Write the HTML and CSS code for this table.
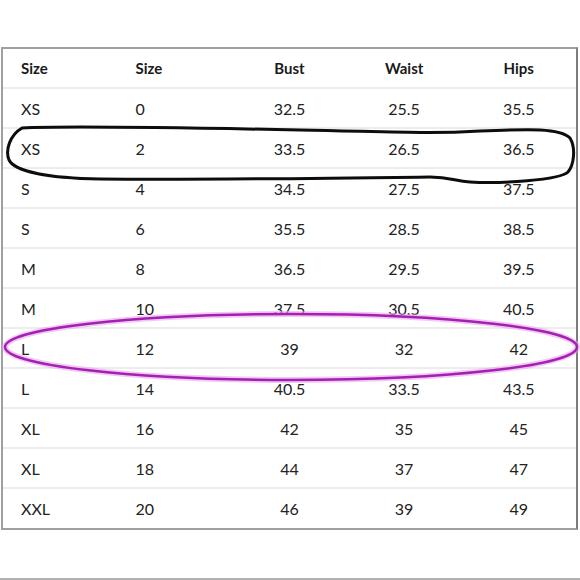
FILE: index.html
```html
<!DOCTYPE html>
<html lang="en">
<head>
<meta charset="utf-8">
<title>Size chart</title>
<link rel="stylesheet" href="styles.css">
</head>
<body>
<div class="page">
  <div class="chart">
    <div class="row head">
      <div class="cell left">Size</div><div class="cell left">Size</div><div class="cell">Bust</div><div class="cell">Waist</div><div class="cell">Hips</div>
    </div>
    <div class="row"><div class="cell left">XS</div><div class="cell left">0</div><div class="cell">32.5</div><div class="cell">25.5</div><div class="cell">35.5</div></div>
    <div class="row"><div class="cell left">XS</div><div class="cell left">2</div><div class="cell">33.5</div><div class="cell">26.5</div><div class="cell">36.5</div></div>
    <div class="row"><div class="cell left">S</div><div class="cell left">4</div><div class="cell">34.5</div><div class="cell">27.5</div><div class="cell">37.5</div></div>
    <div class="row"><div class="cell left">S</div><div class="cell left">6</div><div class="cell">35.5</div><div class="cell">28.5</div><div class="cell">38.5</div></div>
    <div class="row"><div class="cell left">M</div><div class="cell left">8</div><div class="cell">36.5</div><div class="cell">29.5</div><div class="cell">39.5</div></div>
    <div class="row"><div class="cell left">M</div><div class="cell left">10</div><div class="cell">37.5</div><div class="cell">30.5</div><div class="cell">40.5</div></div>
    <div class="row"><div class="cell left">L</div><div class="cell left">12</div><div class="cell">39</div><div class="cell">32</div><div class="cell">42</div></div>
    <div class="row"><div class="cell left">L</div><div class="cell left">14</div><div class="cell">40.5</div><div class="cell">33.5</div><div class="cell">43.5</div></div>
    <div class="row"><div class="cell left">XL</div><div class="cell left">16</div><div class="cell">42</div><div class="cell">35</div><div class="cell">45</div></div>
    <div class="row"><div class="cell left">XL</div><div class="cell left">18</div><div class="cell">44</div><div class="cell">37</div><div class="cell">47</div></div>
    <div class="row last"><div class="cell left">XXL</div><div class="cell left">20</div><div class="cell">46</div><div class="cell">39</div><div class="cell">49</div></div>
  </div>
  <div class="rule"></div>
  <svg class="marks" width="580" height="580" viewBox="0 0 580 580" aria-hidden="true">
    <path class="loop" d="M 22 128 C 60 126, 200 128, 300 130 C 400 132, 430 134, 480 131 C 530 129, 560 128, 570 138 C 576 148, 574 165, 568 172 C 560 180, 500 184, 470 182 C 455 181, 450 177, 430 177 C 350 178, 200 180, 100 179 C 50 178, 15 172, 9 160 C 5 150, 10 135, 22 128 Z"/>
    <ellipse class="glow" cx="291" cy="347" rx="286" ry="33"/>
    <ellipse class="ring" cx="291" cy="347" rx="286" ry="33"/>
  </svg>
</div>
</body>
</html>
```
FILE: styles.css
```css
html, body {
  margin: 0;
  padding: 0;
  background: #ffffff;
}

.page {
  position: relative;
  width: 580px;
  height: 580px;
  overflow: hidden;
  font-family: Lato, "Open Sans", sans-serif;
  color: #222222;
}

.chart {
  margin: 47px 0 0 1px;
  width: 573px;
  border: 2px solid #a0a0a0;
  border-right-color: #7c7c7c;
}

.row {
  display: grid;
  grid-template-columns: repeat(5, 1fr);
  height: 38px;
  border-bottom: 2px solid #ececec;
  align-items: center;
}

.row.last {
  height: 39px;
  border-bottom: none;
}

.cell {
  text-align: center;
  font-size: 16px;
}

.cell.left {
  text-align: left;
  padding-left: 18px;
}

.head .cell {
  font-weight: 700;
  font-size: 15px;
  color: #1a1a1a;
}

.rule {
  margin-top: 48px;
  height: 2px;
  background: #b0b0b0;
}

.marks {
  position: absolute;
  left: 0;
  top: 0;
  pointer-events: none;
}

.loop {
  fill: none;
  stroke: #0d0d0d;
  stroke-width: 3;
  stroke-linejoin: round;
}

.glow {
  fill: none;
  stroke: #e7a5ec;
  stroke-width: 6;
  opacity: 0.6;
}

.ring {
  fill: none;
  stroke: #a51fb4;
  stroke-width: 2.5;
}
```
